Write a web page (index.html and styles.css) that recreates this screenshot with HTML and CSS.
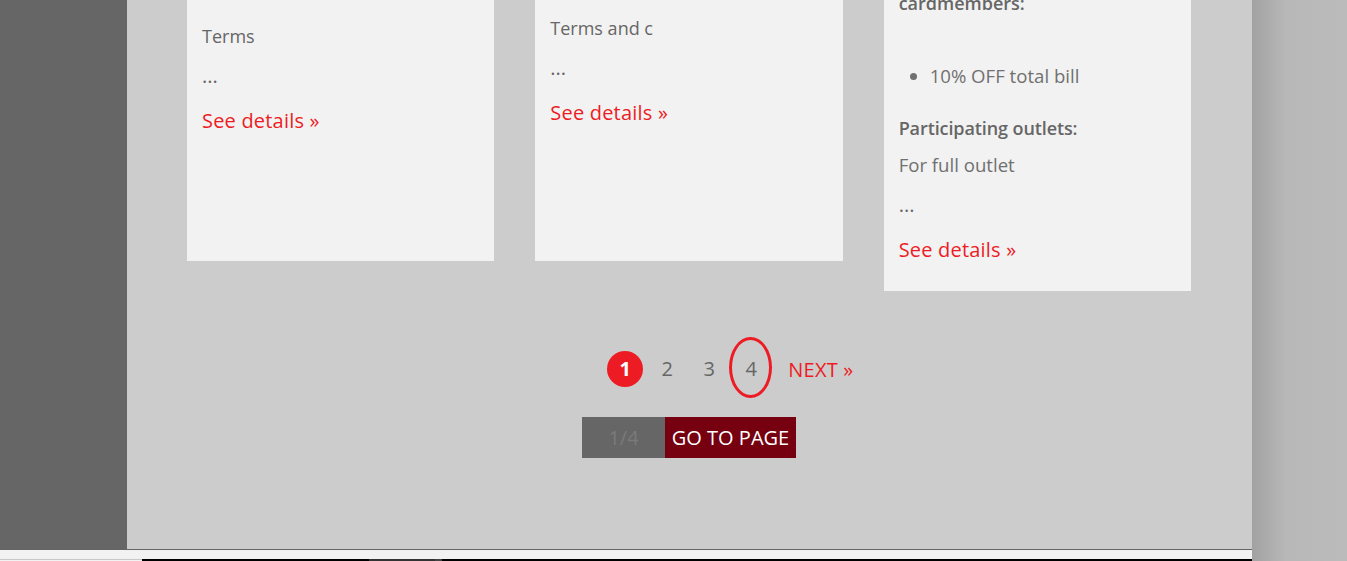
FILE: index.html
```html
<!DOCTYPE html>
<html lang="en">
<head>
    <meta charset="UTF-8">
    <meta name="viewport" content="width=device-width, initial-scale=1.0">
    <title>Card Offers</title>
    <link rel="stylesheet" href="styles.css">
</head>
<body>
    <div class="screen">
        <div class="window">
            <div class="workspace">
                <aside class="sidebar"></aside>
                <main class="content">
                    <section class="offers">
                        <article class="offer">
                            <div class="thumb thumb-a"></div>
                            <div class="offer-body">
                                <h3 class="offer-title">Dining privileges</h3>
                                <p>Terms</p>
                                <p class="more">...</p>
                                <a class="details" href="#">See details &raquo;</a>
                            </div>
                        </article>
                        <article class="offer">
                            <div class="thumb thumb-b"></div>
                            <div class="offer-body">
                                <h3 class="offer-title">Shopping rewards</h3>
                                <p>Terms and c</p>
                                <p class="more">...</p>
                                <a class="details" href="#">See details &raquo;</a>
                            </div>
                        </article>
                        <article class="offer">
                            <div class="thumb thumb-c"></div>
                            <div class="offer-body">
                                <h3 class="offer-title">Restaurant deal</h3>
                                <p class="lead">Exclusive for<br>cardmembers:</p>
                                <ul class="perks">
                                    <li>10% OFF total bill</li>
                                </ul>
                                <p class="label">Participating outlets:</p>
                                <p class="soft">For full outlet</p>
                                <p class="more">...</p>
                                <a class="details" href="#">See details &raquo;</a>
                            </div>
                        </article>
                    </section>

                    <nav class="pager">
                        <a class="pager-edge pager-hidden" href="#">&laquo; PREV</a>
                        <span class="page current">1</span>
                        <a class="page" href="#">2</a>
                        <a class="page" href="#">3</a>
                        <a class="page marked" href="#">4<span class="page-mark"></span></a>
                        <a class="pager-edge" href="#">NEXT &raquo;</a>
                    </nav>

                    <form class="goto" onsubmit="return false;">
                        <input class="goto-input" type="text" placeholder="1/4">
                        <button class="goto-btn" type="submit">GO TO PAGE</button>
                    </form>
                </main>
            </div>
            <div class="statusbar">
                <div class="status-fill"></div>
                <div class="status-track">
                    <span class="track-start"></span>
                    <span class="track-main"><span class="track-thumb"></span></span>
                </div>
            </div>
        </div>
        <div class="shade"></div>
    </div>
</body>
</html>
```

FILE: styles.css
```css
html, body {
    margin: 0;
    height: 561px;
    overflow: hidden;
}
body {
    font-family: 'Open Sans', 'Liberation Sans', sans-serif;
    color: #666;
}
.screen {
    display: flex;
    height: 561px;
}
.window {
    width: 1252px;
    display: flex;
    flex-direction: column;
}
.workspace {
    display: flex;
    height: 550px;
}
.sidebar {
    width: 127px;
    background-color: #666;
}
.content {
    flex: 1;
    background-color: #ccc;
    border-bottom: 1px solid #666;
    box-sizing: border-box;
    padding-right: 1px;
    overflow: hidden;
}
.offers {
    display: grid;
    grid-template-columns: repeat(3, 1fr);
    column-gap: 41px;
    align-items: start;
    width: 1004px;
    margin: -200px 0 0 60px;
}
.offer {
    background-color: #f2f2f2;
    min-height: 461px;
}
.thumb {
    background-color: #ddd;
}
.thumb-a { height: 149px; }
.thumb-b { height: 141px; }
.thumb-c { height: 88px; }
.offer-body {
    padding: 15px 15px 26px;
    font-size: 18px;
    line-height: 28px;
}
.offer-body p {
    margin: 0 0 12px;
}
.offer-title {
    margin: 0 0 30px;
    font-size: 18px;
    font-weight: 600;
}
.lead {
    font-weight: 600;
}
.offer-body .lead {
    margin-bottom: 45px;
}
.perks {
    margin: 0 0 24px;
    padding-left: 31px;
    font-size: 18.6px;
    color: #707070;
}
.offer-body .label {
    font-weight: 600;
    margin-bottom: 9px;
    letter-spacing: -0.1px;
}
.soft {
    font-size: 18.6px;
    color: #707070;
}
.offer-body .more {
    margin-bottom: 16px;
    font-size: 20px;
}
.details {
    display: block;
    font-size: 20px;
    line-height: 30px;
    letter-spacing: 0.2px;
    color: #ed1c24;
    text-decoration: none;
}
.pager {
    display: flex;
    justify-content: center;
    align-items: center;
    gap: 6px;
    margin-top: 60px;
    height: 36px;
}
.page {
    position: relative;
    width: 36px;
    height: 36px;
    line-height: 36px;
    text-align: center;
    font-size: 20px;
    color: #666;
    text-decoration: none;
}
.page.current {
    background-color: #ed1c24;
    color: #fff;
    border-radius: 50%;
    font-weight: 700;
}
.page-mark {
    position: absolute;
    left: -4px;
    top: -14px;
    width: 43px;
    height: 61px;
    box-sizing: border-box;
    border: 3px solid #ed1c24;
    border-radius: 50%;
}
.pager-edge {
    font-size: 20px;
    letter-spacing: 0.2px;
    color: #ed1c24;
    text-decoration: none;
    margin-left: 13px;
}
.pager-hidden {
    visibility: hidden;
    margin: 0 13px 0 0;
}
.goto {
    display: flex;
    justify-content: center;
    margin-top: 30px;
}
.goto-input {
    width: 83px;
    height: 41px;
    box-sizing: border-box;
    border: none;
    background-color: #666;
    text-align: center;
    font-family: inherit;
    font-size: 20px;
    color: #fff;
    outline: none;
}
.goto-input::placeholder {
    color: #7a7a7a;
}
.goto-btn {
    width: 131px;
    height: 41px;
    border: none;
    background-color: #76000f;
    color: #fff;
    font-family: inherit;
    font-size: 20px;
    padding: 0;
    cursor: pointer;
}
.statusbar {
    height: 11px;
    display: flex;
    flex-direction: column;
}
.status-fill {
    height: 9px;
    background-color: #f2f2f2;
}
.status-track {
    display: flex;
    height: 2px;
}
.track-start {
    width: 142px;
    box-sizing: border-box;
    border-top: 1px solid #c8c8c8;
    background-color: #f2f2f2;
}
.track-main {
    flex: 1;
    background-color: #000;
}
.track-thumb {
    display: block;
    width: 66px;
    height: 2px;
    margin-left: 227px;
    background-color: #333;
    border-right: 7px solid #444;
}
.shade {
    flex: 1;
    background: linear-gradient(to right, #a2a2a2, #b8b8b8 35px, #bbb);
}
```
